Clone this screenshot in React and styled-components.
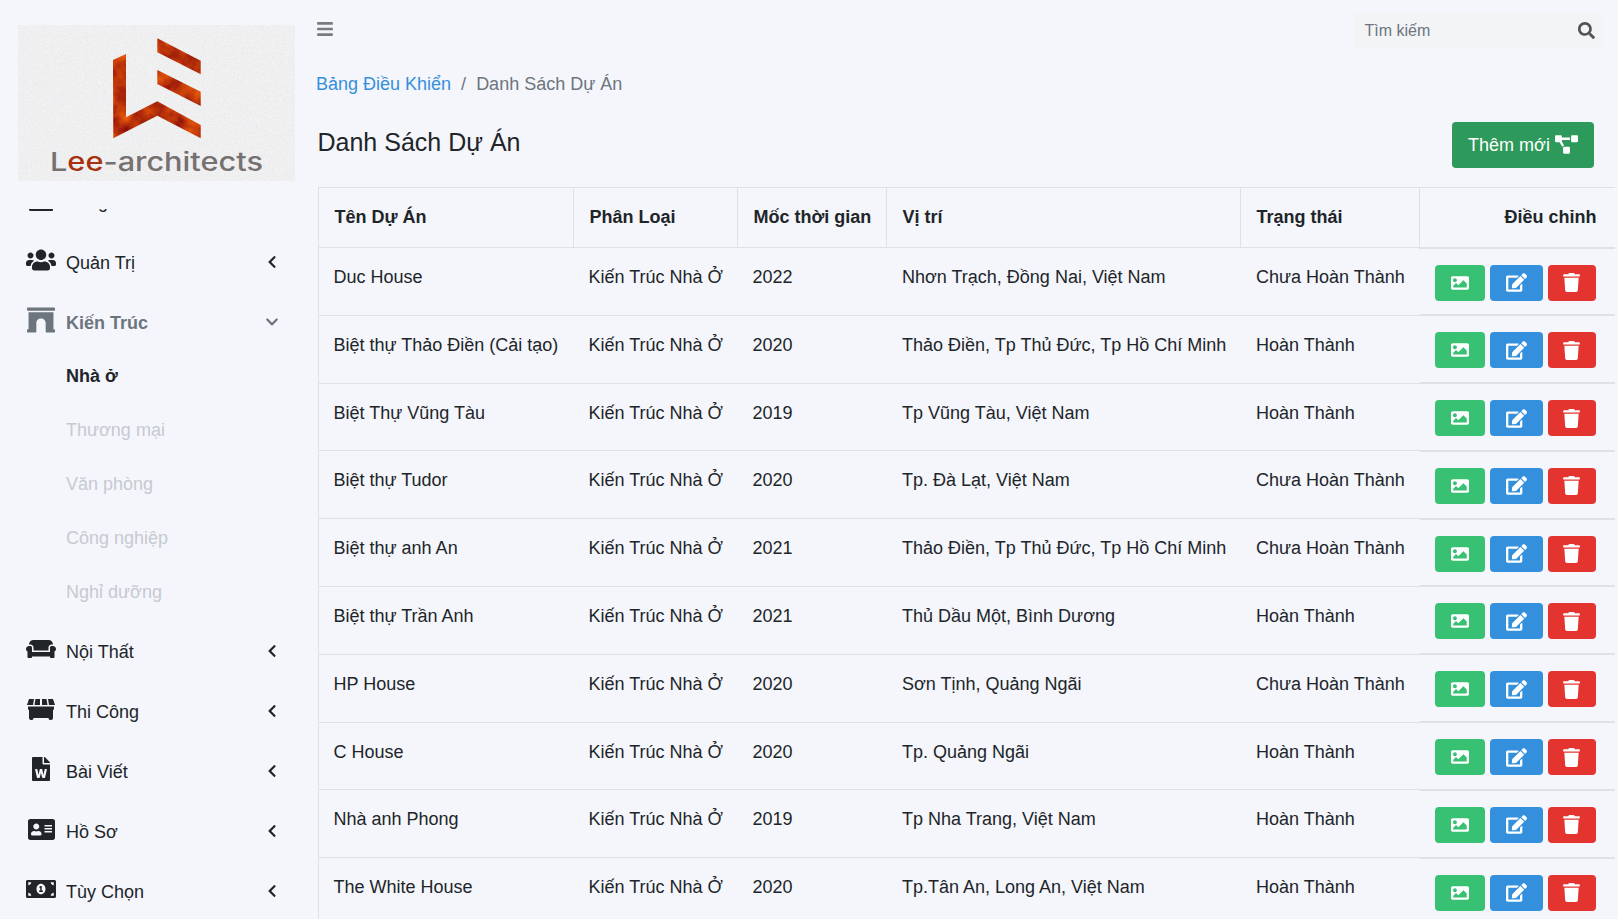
import React from "react";
import styled, { createGlobalStyle } from "styled-components";
import {
  FaUsers, FaArchway, FaCouch, FaFileWord, FaAddressCard, FaMoneyBillAlt,
  FaChevronLeft, FaChevronDown, FaBars, FaSearch, FaProjectDiagram, FaImage, FaEdit, FaTrash, FaChartLine,
} from "react-icons/fa";

const Global = createGlobalStyle`
  html, body { margin: 0; padding: 0; height: 100%; overflow: hidden; }
  body { background: #f4f6fb; color: #212529; font-family: "Liberation Sans", Arial, sans-serif; font-size: 18px; line-height: 27px; }
  * { box-sizing: border-box; }
`;

const Page = styled.div`
  display: flex;
  width: 1618px;
  height: 919px;
  overflow: hidden;
`;
const Sidebar = styled.aside`
  width: 318px;
  flex: none;
  display: flex;
  flex-direction: column;
  height: 100%;
`;
const LogoBox = styled.div`
  flex: none;
  height: 209px;
  padding: 25px 23px 28px 18px;
  svg { display: block; }
`;
const Nav = styled.nav`
  flex: 1;
  min-height: 0;
  overflow: hidden;
  display: flex;
  flex-direction: column;
`;
const NavItem = styled.div`
  flex: none;
  height: 60px;
  display: flex;
  align-items: center;
  padding: 0 39px 0 26px;
  margin-top: ${(p) => (p.$scrolled ? "-37px" : "0")};
  color: ${(p) => (p.$open ? "#6c757d" : "#212529")};
  font-weight: ${(p) => (p.$open ? 700 : 400)};
`;
const IconSlot = styled.span`
  width: 30px;
  flex: none;
  display: flex;
  justify-content: center;
  margin-right: 10px;
  font-size: ${(p) => p.$size || 24}px;
  position: relative;
  top: ${(p) => (p.$flat ? "0" : "-2px")};
  svg { display: block; }
`;
const NavLabel = styled.span`
  flex: 1;
  position: relative;
  top: ${(p) => (p.$flat ? "0" : "1px")};
`;
const Chevron = styled.span`
  display: flex;
  font-size: 14px;
  svg { display: block; }
`;
const SubList = styled.div`
  flex: none;
  margin: -3px 0 2px;
`;
const SubItem = styled.div`
  height: 54px;
  display: flex;
  align-items: center;
  padding-left: 66px;
  color: ${(p) => (p.$active ? "#212529" : "#c6cad1")};
  font-weight: ${(p) => (p.$active ? 700 : 400)};
`;
const Main = styled.main`
  flex: 1;
  min-width: 0;
  display: flex;
  flex-direction: column;
  height: 100%;
`;
const Topbar = styled.div`
  flex: none;
  height: 62px;
  padding: 13px 14px 0 0;
  display: flex;
  justify-content: space-between;
  align-items: flex-start;
`;
const MenuButton = styled.span`
  display: flex;
  margin: 7px 0 0 -2px;
  color: #777b80;
  font-size: 18px;
`;
const SearchBox = styled.div`
  width: 250px;
  height: 35px;
  background: #f3f4f6;
  border-radius: 4px;
  display: flex;
  align-items: center;
  justify-content: space-between;
  padding: 0 9px 0 10.5px;
  font-size: 16px;
  color: #6c757d;
  svg { color: #50545a; font-size: 17px; }
`;
const Breadcrumb = styled.div`
  flex: none;
  height: 44px;
  display: flex;
  align-items: center;
  margin-left: -2px;
  color: #6c757d;
`;
const Crumb = styled.a`
  color: #3490dc;
`;
const Slash = styled.span`
  padding: 0 10px;
`;
const TitleRow = styled.div`
  flex: none;
  height: 81px;
  padding: 16px 24px 0 0;
  display: flex;
  justify-content: space-between;
  align-items: flex-start;
`;
const Title = styled.h1`
  margin: 5px 0 0 -0.5px;
  font-size: 25px;
  font-weight: 400;
  line-height: 30px;
  color: #212529;
`;
const AddButton = styled.button`
  height: 46px;
  width: 142px;
  border: 0;
  border-radius: 4px;
  background: #2d995b;
  color: #fff;
  font: inherit;
  display: flex;
  align-items: center;
  justify-content: center;
  gap: 5px;
  padding: 0;
  svg { font-size: 23px; position: relative; top: -1px; }
`;
const Table = styled.table`
  width: 1296px;
  table-layout: fixed;
  border-collapse: collapse;
  flex: none;
`;
const Th = styled.th`
  height: 60px;
  padding: 0 15px 0 15.5px;
  text-align: ${(p) => (p.$right ? "right" : "left")};
  font-weight: 700;
  white-space: nowrap;
  border: 1px solid #dee2e6;
  border-bottom-width: ${(p) => (p.$right ? "2px" : "1px")};
  border-right: ${(p) => (p.$right ? "0" : "1px solid #dee2e6")};
  padding-right: ${(p) => (p.$right ? "18px" : "15px")};
`;
const Tr = styled.tr`
  height: 67.8px;
`;
const Td = styled.td`
  padding: 16px 15px 15px 15.5px;
  vertical-align: top;
  white-space: nowrap;
  border-bottom: 1px solid #dee2e6;
  &:first-child { border-left: 1px solid #dee2e6; padding-left: 14.5px; }
  &:nth-child(2), &:nth-child(3) { padding-left: 15px; }
`;
const ActionCell = styled.td`
  padding: 16px 19px 0 15px;
  vertical-align: top;
  border-bottom: 2px solid #dee2e6;
`;
const Actions = styled.div`
  display: flex;
  justify-content: flex-end;
  gap: 5px;
`;
const ActionButton = styled.button`
  height: 36px;
  width: ${(p) => p.$w}px;
  border: 0;
  border-radius: 4px;
  padding: 0;
  background: ${(p) => p.$bg};
  color: #fff;
  display: flex;
  align-items: center;
  justify-content: center;
  font-size: ${(p) => p.$size || 18}px;
`;

const rows = [
  ["Duc House", "2022", "Nhơn Trạch, Đồng Nai, Việt Nam", "Chưa Hoàn Thành"],
  ["Biệt thự Thảo Điền (Cải tạo)", "2020", "Thảo Điền, Tp Thủ Đức, Tp Hồ Chí Minh", "Hoàn Thành"],
  ["Biệt Thự Vũng Tàu", "2019", "Tp Vũng Tàu, Việt Nam", "Hoàn Thành"],
  ["Biệt thự Tudor", "2020", "Tp. Đà Lạt, Việt Nam", "Chưa Hoàn Thành"],
  ["Biệt thự anh An", "2021", "Thảo Điền, Tp Thủ Đức, Tp Hồ Chí Minh", "Chưa Hoàn Thành"],
  ["Biệt thự Trần Anh", "2021", "Thủ Dầu Một, Bình Dương", "Hoàn Thành"],
  ["HP House", "2020", "Sơn Tịnh, Quảng Ngãi", "Chưa Hoàn Thành"],
  ["C House", "2020", "Tp. Quảng Ngãi", "Hoàn Thành"],
  ["Nhà anh Phong", "2019", "Tp Nha Trang, Việt Nam", "Hoàn Thành"],
  ["The White House", "2020", "Tp.Tân An, Long An, Việt Nam", "Hoàn Thành"],
];
const colWidths = [255, 164, 149, 354, 179, 195];

function Logo() {
  return (
    <svg width="277" height="156" viewBox="18 25 277 156" aria-label="Lee-architects">
      <defs>
        <filter id="paper" x="0" y="0" width="100%" height="100%" colorInterpolationFilters="sRGB">
          <feTurbulence type="fractalNoise" baseFrequency="1.1" numOctaves="2" seed="4" />
          <feColorMatrix values="0 0 0 0 0.86  0 0 0 0 0.87  0 0 0 0 0.88  1.3 0 0 0 -0.52" result="s" />
          <feMerge>
            <feMergeNode in="SourceGraphic" />
            <feMergeNode in="s" />
          </feMerge>
        </filter>
        <filter id="rust" x="0" y="0" width="100%" height="100%" colorInterpolationFilters="sRGB">
          <feTurbulence type="fractalNoise" baseFrequency="0.06" numOctaves="4" seed="7" result="n" />
          <feColorMatrix in="n" values="0.55 0 0 0 0.46  0.45 0 0 0 -0.02  0 0 0 0 0.04  0 0 0 0 1" result="c" />
          <feComposite in="c" in2="SourceAlpha" operator="in" />
        </filter>
      </defs>
      <rect x="18" y="25" width="277" height="156" fill="#f2f2f3" filter="url(#paper)" />
      <g filter="url(#rust)" fill="#b93a0c">
        <polygon points="113,60 126,54 126,117.3 157.3,101.3 200.7,125 200.7,138.3 157.3,115.7 113.3,138.3" />
        <polygon points="157.3,38.3 200.7,60.7 200.7,74.3 157.3,52.3" />
        <polygon points="157.3,70 200.7,91.7 200.7,106 157.3,84" />
      </g>
      <text x="50" y="171" fontFamily="Inter, sans-serif" fontWeight="500" fontSize="26" textLength="213" lengthAdjust="spacingAndGlyphs" fill="#767170">
        L<tspan fill="#a8320f">ee</tspan>-architects
      </text>
    </svg>
  );
}

function StoreIcon() {
  return (
    <svg width="28" height="21" viewBox="0 0 28 21" fill="currentColor">
      <polygon points="2,0 7,0 6,6 0,6" />
      <polygon points="8.5,0 13,0 13,6 7.5,6" />
      <polygon points="15,0 19.5,0 20.5,6 15,6" />
      <polygon points="21,0 26,0 28,6 22,6" />
      <path d="M1 7.5h26v2q0 1.5-1 1.5v8q0 2-2 2h-1q-1.500 0-1.500-2h-15q0 2-1.500 2h-1q-2 0-2-2v-8q-1 0-1-1.500z" />
    </svg>
  );
}

const Item = ({ icon, size, children, open }) => (
  <NavItem $open={open}>
    <IconSlot $size={size}>{icon}</IconSlot>
    <NavLabel>{children}</NavLabel>
    <Chevron>{open ? <FaChevronDown /> : <FaChevronLeft />}</Chevron>
  </NavItem>
);

export default function App() {
  return (
    <Page>
      <Global />
      <Sidebar>
        <LogoBox><Logo /></LogoBox>
        <Nav>
          <NavItem $scrolled>
            <IconSlot $flat><FaChartLine /></IconSlot>
            <NavLabel $flat>Bảng Điều Khiển</NavLabel>
          </NavItem>
          <Item icon={<FaUsers />} size={30}>Quản Trị</Item>
          <Item icon={<FaArchway />} size={28} open>Kiến Trúc</Item>
          <SubList>
            <SubItem $active>Nhà ở</SubItem>
            <SubItem>Thương mại</SubItem>
            <SubItem>Văn phòng</SubItem>
            <SubItem>Công nghiệp</SubItem>
            <SubItem>Nghỉ dưỡng</SubItem>
          </SubList>
          <Item icon={<FaCouch />} size={30}>Nội Thất</Item>
          <Item icon={<StoreIcon />}>Thi Công</Item>
          <Item icon={<FaFileWord />} size={24}>Bài Viết</Item>
          <Item icon={<FaAddressCard />} size={27}>Hồ Sơ</Item>
          <Item icon={<FaMoneyBillAlt />} size={30}>Tùy Chọn</Item>
        </Nav>
      </Sidebar>
      <Main>
        <Topbar>
          <MenuButton><FaBars /></MenuButton>
          <SearchBox>Tìm kiếm<FaSearch /></SearchBox>
        </Topbar>
        <Breadcrumb>
          <Crumb>Bảng Điều Khiển</Crumb>
          <Slash>/</Slash>
          Danh Sách Dự Án
        </Breadcrumb>
        <TitleRow>
          <Title>Danh Sách Dự Án</Title>
          <AddButton>Thêm mới <FaProjectDiagram /></AddButton>
        </TitleRow>
        <Table>
          <colgroup>
            {colWidths.map((w) => <col key={w} width={w} />)}
          </colgroup>
          <thead>
            <tr>
              <Th>Tên Dự Án</Th>
              <Th>Phân Loại</Th>
              <Th>Mốc thời gian</Th>
              <Th>Vị trí</Th>
              <Th>Trạng thái</Th>
              <Th $right>Điều chỉnh</Th>
            </tr>
          </thead>
          <tbody>
            {rows.map((r) => (
              <Tr key={r[0]}>
                <Td>{r[0]}</Td>
                <Td>Kiến Trúc Nhà Ở</Td>
                <Td>{r[1]}</Td>
                <Td>{r[2]}</Td>
                <Td>{r[3]}</Td>
                <ActionCell>
                  <Actions>
                    <ActionButton $bg="#38c172" $w={50}><FaImage /></ActionButton>
                    <ActionButton $bg="#3490dc" $w={53} $size={21}><FaEdit /></ActionButton>
                    <ActionButton $bg="#e3342f" $w={48} $size={19}><FaTrash /></ActionButton>
                  </Actions>
                </ActionCell>
              </Tr>
            ))}
          </tbody>
        </Table>
      </Main>
    </Page>
  );
}
